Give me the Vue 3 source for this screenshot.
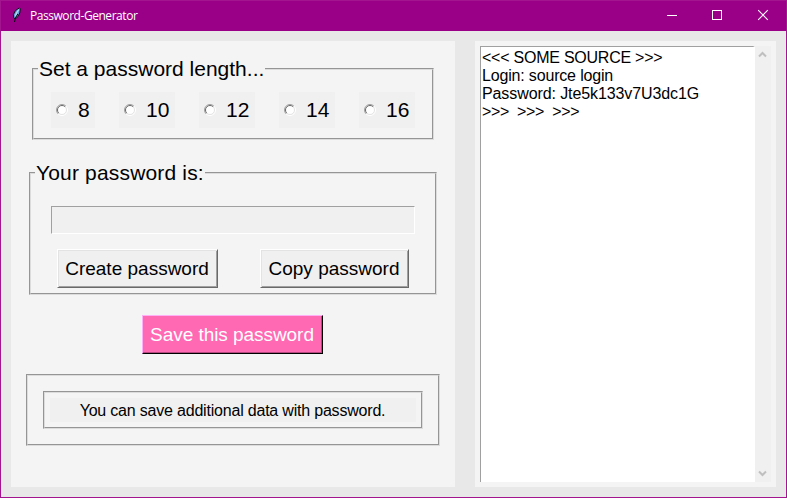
<script setup>
import { ref } from 'vue'

const lengths = [8, 10, 12, 14, 16]
const selected = ref(null)
const password = ref('')
const lines = [
  { text: '<<< SOME SOURCE >>>', cls: 'l1' },
  { text: 'Login: source login', cls: 'l2' },
  { text: 'Password: Jte5k133v7U3dc1G', cls: 'l3' },
  { text: '>>>  >>>  >>>', cls: 'l4' },
]
</script>

<template>
  <div class="window">
    <header class="titlebar">
      <svg class="feather" width="12" height="16" viewBox="0 0 12 16">
        <path d="M8.5 .8 L9.3 1.8 L8.8 6 L6.6 9.8 L4.4 12 L2.6 10.6 L2.4 7.6 L4.4 3.6 Z" fill="#5f9bd8" stroke="#10101c" stroke-width="1" />
        <path d="M7.7 2.6 L5.4 6.2 L4.4 9.4" fill="none" stroke="#b8dcf5" stroke-width="1.3" />
        <path d="M6.8 7 L4.4 11 L3.5 15" fill="none" stroke="#08080f" stroke-width="1" />
      </svg>
      <span class="title">Password-Generator</span>
      <div class="controls">
        <svg width="46" height="30" viewBox="0 0 46 30"><path d="M18 14.5H28" stroke="#fff" /></svg>
        <svg width="46" height="30" viewBox="0 0 46 30"><rect x="17.5" y="9.5" width="9" height="9" fill="none" stroke="#fff" /></svg>
        <svg width="46" height="30" viewBox="0 0 46 30"><path d="M17.2 9.2L26.8 18.8M26.8 9.2L17.2 18.8" stroke="#fff" stroke-width="1.1" /></svg>
      </div>
    </header>
    <main class="body">
      <section class="left">
        <div class="groove lengths">
          <div class="legend legend-length">Set a password length...</div>
          <div class="options">
            <label v-for="n in lengths" :key="n" class="option" @click="selected = n">
              <svg width="12" height="12" viewBox="0 0 12 12">
                <circle cx="6" cy="6" r="5" fill="#fff" />
                <path d="M2.1 9.9A5.5 5.5 0 0 1 9.9 2.1" fill="none" stroke="#a0a0a0" />
                <path d="M9.9 2.1A5.5 5.5 0 0 1 2.1 9.9" fill="none" stroke="#fff" />
                <path d="M2.8 9.2A4.5 4.5 0 0 1 9.2 2.8" fill="none" stroke="#696969" />
                <path d="M9.2 2.8A4.5 4.5 0 0 1 2.8 9.2" fill="none" stroke="#e3e3e3" />
                <circle v-if="selected === n" cx="6" cy="6" r="2" />
              </svg>
              <span>{{ n }}</span>
            </label>
          </div>
        </div>

        <div class="groove result">
          <div class="legend legend-result">Your password is:</div>
          <input v-model="password" class="entry" type="text" readonly />
          <div class="actions">
            <button class="btn create">Create password</button>
            <button class="btn copy">Copy password</button>
          </div>
        </div>

        <button class="btn save">Save this password</button>

        <div class="groove extra">
          <div class="groove extra-inner">
            <div class="note"><span>You can save additional data with password.</span></div>
          </div>
        </div>
      </section>

      <section class="right">
        <div class="log">
          <div v-for="l in lines" :key="l.cls" :class="['line', l.cls]">{{ l.text }}</div>
        </div>
        <div class="scrollbar">
          <svg width="9" height="7" viewBox="0 0 9 7"><path d="M1 5.5L4.5 2L8 5.5" fill="none" stroke="#bfbfbf" stroke-width="2" /></svg>
          <svg width="9" height="7" viewBox="0 0 9 7"><path d="M1 1.5L4.5 5L8 1.5" fill="none" stroke="#bfbfbf" stroke-width="2" /></svg>
        </div>
      </section>
    </main>
  </div>
</template>

<style>
body { margin: 0; overflow: hidden; }
</style>

<style scoped>
* { box-sizing: border-box; }
.window {
  width: 787px;
  height: 498px;
  display: flex;
  flex-direction: column;
  background: #e8e8e8;
  border: 1px solid #a3148f;
  font-family: "Liberation Sans", Arial, sans-serif;
  color: #000;
}
.titlebar {
  height: 30px;
  flex: none;
  display: flex;
  background: #990087;
  padding-left: 10px;
}
.feather { margin-top: 6px; flex: none; }
.title {
  margin-left: 7px;
  font: 12px/29px "Open Sans", "Noto Sans", sans-serif;
  letter-spacing: -0.45px;
  color: #fff;
  white-space: nowrap;
}
.controls { display: flex; margin-left: auto; margin-right: -1px; }
.body {
  flex: 1;
  display: flex;
  gap: 20px;
  padding: 10px;
  min-height: 0;
}
.left {
  width: 444px;
  background: #f4f4f4;
  display: flex;
  flex-direction: column;
}
.groove {
  position: relative;
  flex: none;
  border: 1px solid;
  border-color: #959595 #dcdcdc #dcdcdc #959595;
}
.groove::before {
  content: "";
  position: absolute;
  inset: 0;
  border: 1px solid;
  border-color: #dcdcdc #959595 #959595 #dcdcdc;
  pointer-events: none;
}
.legend {
  position: absolute;
  background: #f4f4f4;
  font-size: 21px;
  line-height: 24px;
  height: 24px;
  white-space: nowrap;
}
.lengths {
  width: 402px;
  height: 72px;
  margin: 27px 0 0 21px;
  padding: 23px 0 0 18px;
}
.legend-length { left: 5px; top: -12px; width: 227px; padding-left: 1px; }
.options { display: flex; gap: 24px; }
.option {
  display: flex;
  align-items: center;
  width: 56px;
  height: 36px;
  padding-left: 5px;
  gap: 10px;
  background: #f0f0f0;
  font-size: 21px;
}
.option:first-child { width: 44px; }
.option svg { flex: none; }
.result {
  width: 408px;
  height: 123px;
  margin: 32px 0 0 18px;
  padding: 33px 0 0 21px;
}
.legend-result { left: 5px; top: -12px; width: 170px; padding-left: 1px; letter-spacing: 0.17px; }
.entry {
  display: block;
  width: 364px;
  height: 28px;
  margin: 0;
  padding: 0 2px;
  background: #f0f0f0;
  border: 1px solid;
  border-color: #a0a0a0 #fff #fff #a0a0a0;
  border-radius: 0;
  outline: none;
  font: 21px "Liberation Sans", Arial, sans-serif;
}
.actions { display: flex; gap: 42px; margin: 15px 0 0 6px; }
.btn {
  height: 39px;
  margin: 0;
  padding: 0 1px 0 0;
  border: 1px solid;
  border-color: #fff #696969 #696969 #fff;
  box-shadow: inset 1px 1px #e3e3e3, inset -1px -1px #a0a0a0;
  border-radius: 0;
  background: #f0f0f0;
  color: #000;
  font: 19px/36px "Liberation Sans", Arial, sans-serif;
  white-space: nowrap;
}
.create { width: 161px; }
.copy { width: 149px; }
.save {
  flex: none;
  width: 181px;
  margin: 20px 0 0 131px;
  background: #ff69b4;
  color: #fff;
  border-color: #ffb0f6 #000 #000 #ffb0f6;
  box-shadow: inset -1px -1px #b3497e;
  letter-spacing: -0.05px;
}
.extra {
  width: 414px;
  height: 72px;
  margin: 20px 0 0 15px;
  padding: 16px;
}
.extra-inner {
  width: 380px;
  height: 38px;
  padding: 6px;
}
.note {
  width: 366px;
  height: 24px;
  background: #f0f0f0;
  text-align: center;
  font-size: 16px;
  line-height: 25px;
  letter-spacing: -0.2px;
  padding-right: 1px;
  white-space: nowrap;
}
.right {
  width: 301px;
  padding: 5px;
  display: flex;
  background: #f4f4f4;
}
.log {
  width: 275px;
  background: #fff;
  padding: 2px 0 0 1px;
  border-top: 1px solid #a0a0a0;
  border-left: 1px solid #a0a0a0;
  border-right: 2px solid #fff;
}
.line {
  height: 18px;
  font-size: 16px;
  line-height: 18px;
  white-space: pre;
}
.l1 { letter-spacing: -0.24px; }
.l2 { letter-spacing: -0.17px; }
.l3 { letter-spacing: -0.1px; }
.l4 { letter-spacing: -0.36px; }
.scrollbar {
  width: 16px;
  background: #f0f0f0;
  display: flex;
  flex-direction: column;
  justify-content: space-between;
  align-items: center;
  padding: 5px 1px 5px 0;
}
</style>
